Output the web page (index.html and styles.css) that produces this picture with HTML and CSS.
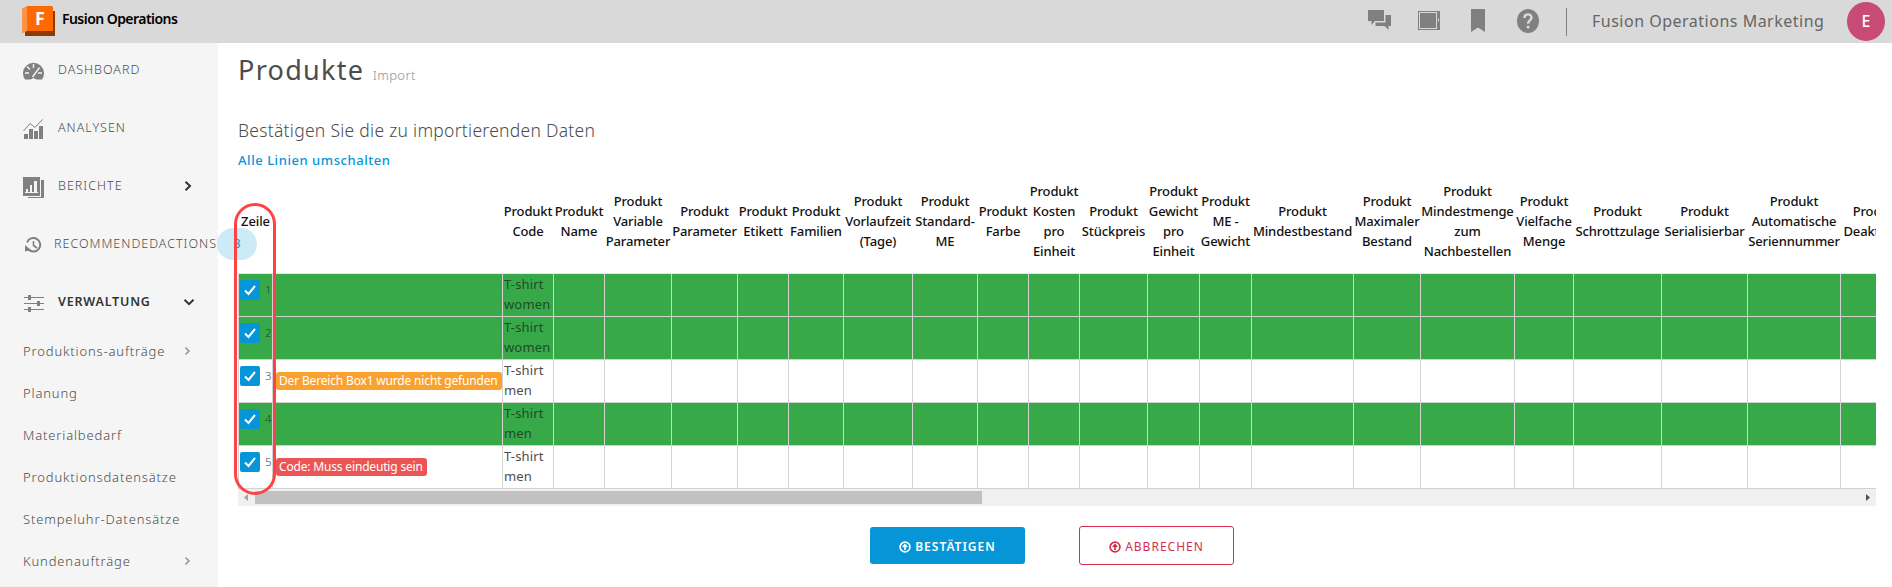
FILE: index.html
```
<!DOCTYPE html>
<html lang="de">
<head>
<meta charset="utf-8">
<title>Fusion Operations – Produkte Import</title>
<link rel="stylesheet" href="styles.css">
</head>
<body>
<header class="topbar">
  <svg class="logo" width="34" height="31" viewBox="0 0 34 31">
    <path d="M3 25h28V5h2v25H3z" fill="#8f3a00"/>
    <path d="M5 0h25l1 1v24H4V2z" fill="#ff6a00"/>
    <path d="M0 2.500 5 0v25L0 27.500z" fill="#ff9245"/>
    <text class="logo-letter" x="13" y="19">F</text>
  </svg>
  <span class="brand">Fusion Operations</span>
  <nav class="tools">
    <svg class="t-chat" width="24" height="22" viewBox="0 0 24 22"><path d="M0 0h16v11H7l-3.500 4v-4H0z"/><path d="M17.500 5H23v11h-2.500v4l-4-4H7.500v-3.500h10z"/></svg>
    <svg class="t-tablet" width="22" height="19" viewBox="0 0 22 19"><path fill-rule="evenodd" d="M0 0h22v19H0zM1 1v17h18V1zM20 7.500v3h1v-3z"/><path d="M2 2h16v15H2z"/></svg>
    <svg class="t-mark" width="14" height="24" viewBox="0 0 14 24"><path d="M0 0h14v23l-7-4.500L0 23z"/></svg>
    <svg class="t-help" width="22" height="24" viewBox="0 0 22 24"><ellipse cx="11" cy="12" rx="11" ry="12"/><path class="q" d="M7.500 9c0-5 7-4.500 7-.5 0 3-3.400 3-3.400 6.300"/><circle cx="11.100" cy="18" r="1.500" fill="#d9d9d9"/></svg>
  </nav>
  <span class="divider"></span>
  <span class="account">Fusion Operations Marketing</span>
  <span class="avatar">E</span>
</header>
<div class="layout">
  <aside class="sidebar">
    <a class="nav"><span class="ico"><svg width="21" height="18" viewBox="0 0 21 18"><path d="M2 17.500a10.500 10.500 0 1 1 17 0h-5.500l-3-1.500-3 1.500z" fill="#808080"/><path d="M10.500 2v4M4 4.500l3 3M2 11h4M15 11h4M9.500 15l7-9.500" stroke="#f5f5f5" stroke-width="1.400"/></svg></span><span>DASHBOARD</span></a>
    <a class="nav"><span class="ico"><svg width="21" height="20" viewBox="0 0 21 20"><path d="M1 15h4v5H1zM6 10h4v10H6zM11 12h4v8h-4zM16 7h4v13h-4z" fill="#808080"/><path d="M.5 12 7 4.500l5 4L19.500.5" fill="none" stroke="#808080"/></svg></span><span>ANALYSEN</span></a>
    <a class="nav"><span class="ico"><svg width="21" height="21" viewBox="0 0 21 21"><path d="M0 0h17v19H0zM18 3h3v18H5v-1h13z" fill="#808080"/><path d="M2 15h13v1H2zM3 12h2v3H3zM7 8h2v7H7zM11 4h3v11h-3z" fill="#f5f5f5"/></svg></span><span>BERICHTE</span><svg class="chev side" width="10" height="10" viewBox="0 0 10 10"><path d="M2.500.8 7 5 2.500 9.200"/></svg></a>
    <a class="nav history"><span class="ico"><svg width="17" height="16" viewBox="0 0 17 16"><path d="M2 5.500A6.800 6.800 0 1 1 3.500 12.500" fill="none" stroke="#808080" stroke-width="2"/><path d="M0 8v6.500l6-1.500z" fill="#808080"/><path d="M8.500 4v4.500l3.500 2.500" fill="none" stroke="#808080" stroke-width="1.600"/></svg></span><span>RECOMMENDEDACTIONS</span><span class="badge">3</span></a>
    <a class="nav active"><span class="ico"><svg class="sliders" width="20" height="17" viewBox="0 0 20 17"><path d="M0 2h20v1H0zM0 8h20v1H0zM0 14h20v1H0zM4 0h3v5H4zM13 6h3v5h-3zM4 12h3v5H4z" fill="#808080"/></svg></span><span>VERWALTUNG</span><svg class="chev" width="12" height="10" viewBox="0 0 12 10"><path d="M1.500 2.800 6 7.200l4.500-4.400"/></svg></a>
    <div class="submenu">
      <a class="sub">Produktions-aufträge<svg class="chev" width="7" height="10" viewBox="0 0 7 10"><path d="M1.500 1.500 5 5 1.500 8.500"/></svg></a>
      <a class="sub">Planung</a>
      <a class="sub">Materialbedarf</a>
      <a class="sub">Produktionsdatensätze</a>
      <a class="sub">Stempeluhr-Datensätze</a>
      <a class="sub">Kundenaufträge<svg class="chev" width="7" height="10" viewBox="0 0 7 10"><path d="M1.500 1.500 5 5 1.500 8.500"/></svg></a>
    </div>
  </aside>
  <main class="main">
    <h1 class="title">Produkte <small class="crumb">Import</small></h1>
    <h2 class="subtitle">Bestätigen Sie die zu importierenden Daten</h2>
    <a class="toggle">Alle Linien umschalten</a>
    <div class="grid-wrap">
      <div class="highlight"></div>
      <div class="scroller">
        <table class="grid">
          <colgroup><col style="width:34px"><col style="width:230px"><col style="width:51px"><col style="width:51px"><col style="width:67px"><col style="width:66px"><col style="width:51px"><col style="width:55px"><col style="width:69px"><col style="width:65px"><col style="width:51px"><col style="width:51px"><col style="width:68px"><col style="width:52px"><col style="width:52px"><col style="width:102px"><col style="width:67px"><col style="width:94px"><col style="width:59px"><col style="width:88px"><col style="width:86px"><col style="width:93px"><col style="width:73px"></colgroup>
          <thead><tr><th>Zeile</th><th></th><th>Produkt<br>Code</th><th>Produkt<br>Name</th><th>Produkt<br>Variable<br>Parameter</th><th>Produkt<br>Parameter</th><th>Produkt<br>Etikett</th><th>Produkt<br>Familien</th><th>Produkt<br>Vorlaufzeit<br>(Tage)</th><th>Produkt<br>Standard-<br>ME</th><th>Produkt<br>Farbe</th><th>Produkt<br>Kosten<br>pro<br>Einheit</th><th>Produkt<br>Stückpreis</th><th>Produkt<br>Gewicht<br>pro<br>Einheit</th><th>Produkt<br>ME -<br>Gewicht</th><th>Produkt<br>Mindestbestand</th><th>Produkt<br>Maximaler<br>Bestand</th><th>Produkt<br>Mindestmenge<br>zum<br>Nachbestellen</th><th>Produkt<br>Vielfache<br>Menge</th><th>Produkt<br>Schrottzulage</th><th>Produkt<br>Serialisierbar</th><th>Produkt<br>Automatische<br>Seriennummer</th><th>Produkt<br>Deaktiviert</th></tr></thead>
          <tbody>
            <tr class="ok"><td><span class="pick"><svg class="check" width="20" height="20" viewBox="0 0 20 20"><path d="M5 10.500 8.500 14 15 6"/></svg>1</span></td><td></td><td>T-shirt women</td><td></td><td></td><td></td><td></td><td></td><td></td><td></td><td></td><td></td><td></td><td></td><td></td><td></td><td></td><td></td><td></td><td></td><td></td><td></td><td></td></tr>
            <tr class="ok"><td><span class="pick"><svg class="check" width="20" height="20" viewBox="0 0 20 20"><path d="M5 10.500 8.500 14 15 6"/></svg>2</span></td><td></td><td>T-shirt women</td><td></td><td></td><td></td><td></td><td></td><td></td><td></td><td></td><td></td><td></td><td></td><td></td><td></td><td></td><td></td><td></td><td></td><td></td><td></td><td></td></tr>
            <tr><td><span class="pick"><svg class="check" width="20" height="20" viewBox="0 0 20 20"><path d="M5 10.500 8.500 14 15 6"/></svg>3</span></td><td><span class="label warn">Der Bereich Box1 wurde nicht gefunden</span></td><td>T-shirt men</td><td></td><td></td><td></td><td></td><td></td><td></td><td></td><td></td><td></td><td></td><td></td><td></td><td></td><td></td><td></td><td></td><td></td><td></td><td></td><td></td></tr>
            <tr class="ok"><td><span class="pick"><svg class="check" width="20" height="20" viewBox="0 0 20 20"><path d="M5 10.500 8.500 14 15 6"/></svg>4</span></td><td></td><td>T-shirt men</td><td></td><td></td><td></td><td></td><td></td><td></td><td></td><td></td><td></td><td></td><td></td><td></td><td></td><td></td><td></td><td></td><td></td><td></td><td></td><td></td></tr>
            <tr><td><span class="pick"><svg class="check" width="20" height="20" viewBox="0 0 20 20"><path d="M5 10.500 8.500 14 15 6"/></svg>5</span></td><td><span class="label error">Code: Muss eindeutig sein</span></td><td>T-shirt men</td><td></td><td></td><td></td><td></td><td></td><td></td><td></td><td></td><td></td><td></td><td></td><td></td><td></td><td></td><td></td><td></td><td></td><td></td><td></td><td></td></tr>
          </tbody>
        </table>
      </div>
      <div class="scrollbar"><svg width="17" height="17" viewBox="0 0 17 17"><path d="M10 5v7L6 8.500z" fill="#a3a3a3"/></svg><span class="thumb"></span><svg class="right" width="17" height="17" viewBox="0 0 17 17"><path d="M7 5v7l4-3.500z" fill="#505050"/></svg></div>
    </div>
    <div class="actions">
      <button class="btn primary"><svg width="12" height="12" viewBox="0 0 12 12"><circle cx="6" cy="6" r="4.900"/><path d="M6 9V4M3.800 6 6 3.800 8.200 6"/></svg><span>BESTÄTIGEN</span></button>
      <button class="btn cancel"><svg width="12" height="12" viewBox="0 0 12 12"><circle cx="6" cy="6" r="4.900"/><path d="M6 9V4M3.800 6 6 3.800 8.200 6"/></svg><span>ABBRECHEN</span></button>
    </div>
  </main>
</div>
</body>
</html>
```
FILE: styles.css
```
* { box-sizing: border-box; }
body { margin: 0; height: 587px; overflow: hidden; background: #fff; color: #4c4c4c; font: 13px/20px "Noto Sans", "Open Sans", sans-serif; }

.topbar { display: flex; align-items: center; height: 43px; padding: 0 7px 0 22px; background: #d9d9d9; }
.logo { margin-top: -1px; }
.logo-letter { font: 700 18px "Noto Sans", sans-serif; fill: #fff; }
.brand { margin: -6px auto 0 6px; font-size: 14px; font-weight: 600; letter-spacing: -.55px; color: #000; }
.tools { display: flex; align-items: center; height: 41px; margin-bottom: 2px; fill: #808080; }
.t-chat { margin-top: 1px; }
.t-tablet { margin-left: 26px; }
.t-mark { margin-left: 31px; }
.t-help { margin-left: 32px; }
.q { fill: none; stroke: #d9d9d9; stroke-width: 2.4; }
.divider { width: 1px; height: 28px; margin: 1px 25px 0 27px; background: #808080; }
.account { width: 232px; margin: -2px 23px 0 0; font-size: 16px; letter-spacing: .5px; white-space: nowrap; color: #666; }
.avatar { width: 38px; height: 39px; margin-top: -1px; border-radius: 50%; background: #c84b74; color: #fff; font-size: 16px; font-weight: 500; line-height: 39px; text-align: center; }

.layout { display: flex; height: 544px; }
.sidebar { flex: none; width: 218px; background: #f5f5f5; }
.nav { position: relative; display: flex; align-items: center; height: 58px; padding: 0 23px; margin-top: -2px; margin-bottom: 2px; font-size: 12.5px; font-weight: 300; letter-spacing: 1px; white-space: nowrap; color: #4c4c4c; }
.ico { display: flex; flex: none; width: 35px; padding-top: 2px; }
.nav.history { padding-left: 25px; padding-right: 0; }
.history .ico { width: 29px; padding-top: 1px; }
.sliders { margin-left: 1px; }
.badge { position: absolute; left: 217px; top: 13px; width: 40px; height: 32px; border-radius: 16px; background: #cdeaf7; color: #0696d7; line-height: 32px; text-align: center; z-index: 1; font-weight: 400; letter-spacing: 0; }
.nav.active { font-weight: 600; letter-spacing: .8px; color: #333; }
.chev { margin-left: auto; fill: none; stroke: #333; stroke-width: 2; }
.chev.side { margin-right: 2px; }
.submenu { margin-top: -3px; }
.sub { display: flex; align-items: center; height: 42px; padding: 0 27px 0 23px; font-size: 13px; font-weight: 300; letter-spacing: .85px; color: #4c4c4c; }
.sub .chev { stroke: #999; stroke-width: 1.6; }

.main { flex: 1; min-width: 0; padding: 0 16px 0 20px; }
.title { margin: 0; height: 68px; padding-top: 7px; font-size: 27px; line-height: 40px; font-weight: 400; letter-spacing: 1.3px; }
.crumb { font-size: 13px; font-weight: 300; letter-spacing: .4px; color: #8a93a0; }
.subtitle { margin: 0; height: 39px; line-height: 38px; font-size: 17.5px; font-weight: 300; letter-spacing: .27px; }
.toggle { display: block; height: 20px; line-height: 21px; font-weight: 500; letter-spacing: .55px; color: #0696d7; }
.grid-wrap { position: relative; }
.highlight { position: absolute; z-index: 2; left: -4px; top: 33px; width: 42px; height: 292px; border: 3px solid #ff4343; border-radius: 21px; }
.scroller { overflow: hidden; }
.grid { width: 1675px; table-layout: fixed; border-collapse: separate; border-spacing: 0; }
.grid th { height: 104px; padding: 0 0 2px 1px; border-bottom: 1px solid #e6e6e6; font-weight: 500; letter-spacing: -.12px; color: #111; white-space: nowrap; }
.grid td { height: 43px; padding: 0 1px; border-left: 1px solid #d2d2d2; border-bottom: 1px solid #d2d2d2; vertical-align: top; letter-spacing: .15px; }
.ok td { background: #38a948; color: #1f4a2c; }
.pick { display: flex; gap: 5px; padding-top: 6px; font-size: 11.5px; font-weight: 300; letter-spacing: 0; white-space: nowrap; }
.check { flex: none; border-radius: 2px; background: #0696d7; fill: none; stroke: #fff; stroke-width: 2; }
.label { display: block; width: max-content; height: 18px; margin: 12px 0 0 2px; padding: 0 4px 0 3px; border-radius: 3px; font-size: 12px; line-height: 17px; letter-spacing: -.17px; color: #fff; white-space: nowrap; }
.warn { background: #faa22f; }
.error { background: #ec5555; }
.scrollbar { display: flex; align-items: center; height: 17px; background: #f0f0f0; }
.thumb { width: 727px; height: 13px; background: #c1c1c1; }
.right { margin-left: auto; }

.actions { display: flex; align-items: center; gap: 54px; padding: 20px 0 0 632px; }
.btn { display: flex; align-items: center; justify-content: center; gap: 4px; width: 155px; height: 37px; padding: 2px 0 0; border: 0; border-radius: 3px; font: 12px "Noto Sans", sans-serif; letter-spacing: 1px; }
.btn svg { fill: none; stroke: currentColor; stroke-width: 1.700; }
.primary { background: #0696d7; color: #fff; font-weight: 600; }
.cancel { height: 39px; border: 1px solid #d62f4b; background: #fff; color: #d62f4b; }
```
